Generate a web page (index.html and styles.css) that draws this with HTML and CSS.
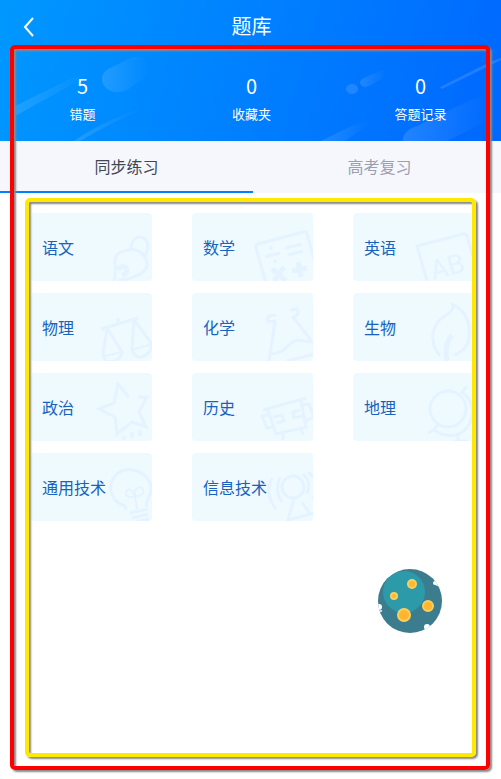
FILE: index.html
```html
<!DOCTYPE html>
<html lang="zh-CN">
<head>
<meta charset="utf-8">
<meta name="viewport" content="width=device-width, initial-scale=1">
<title>题库</title>
<link rel="stylesheet" href="styles.css">
</head>
<body>
<div class="page">
  <header class="hero">
    <svg class="hero-art" viewBox="0 0 501 141" preserveAspectRatio="none" aria-hidden="true">
      <defs>
        <linearGradient id="fade"><stop offset="0" stop-color="#fff" stop-opacity=".13"/><stop offset=".9" stop-color="#fff" stop-opacity="0"/></linearGradient>
      </defs>
      <g fill="url(#fade)">
        <path d="M9 111Q10 109 13 107L66 81Q80 74 98 68L75 83L17 115Z"/>
        <path d="M102 79C102 72 108 69 114 66L133 57Q150 55 153 72L127 90C114 96 102 89 102 79Z"/>
        <path d="M74 141Q105 119 152 105Q110 123 80 141Z"/>
        <path d="M321 141L345 129Q362 121 375 120L345 141Z"/>
        <path d="M403 141Q402 131 417 126L462 104Q480 95 501 94V114L447 141Z"/>
        <path d="M360 82Q361 79 366 77L387 68L389 75L369 86Q361 89 360 82Z"/>
      </g>
      <path d="M440 87L490 62L501 58V60L442 89Z" fill="#fff" opacity=".13"/>
      <ellipse cx="352" cy="89" rx="6" ry="5" fill="#fff" opacity=".12"/>
    </svg>
    <div class="topbar">
      <button class="back" type="button" aria-label="返回">
        <svg viewBox="0 0 12 20" width="12" height="20" aria-hidden="true"><path d="M10 1L2 10L10 19" fill="none" stroke="#fff" stroke-width="2"/></svg>
      </button>
      <h1 class="title">题库</h1>
    </div>
    <nav class="stats">
      <a class="stat" href="#wrong"><span class="count">5</span><span class="caption">错题</span></a>
      <a class="stat" href="#saved"><span class="count">0</span><span class="caption">收藏夹</span></a>
      <a class="stat" href="#log"><span class="count">0</span><span class="caption">答题记录</span></a>
    </nav>
  </header>
  <div class="tabs" role="tablist">
    <button class="tab active" type="button" role="tab" aria-selected="true">同步练习</button>
    <button class="tab" type="button" role="tab" aria-selected="false">高考复习</button>
  </div>
  <main class="subjects">
    <a class="card" href="#chinese"><svg class="art" viewBox="0 0 121 68" aria-hidden="true"><path d="M83 68Q85 60 84 49Q84 40 93 38L101 36Q113 38 116 49Q118 57 107 62Q98 67 87 67M100 36C100 27 106 22 112 25C119 29 117 36 114 43"/><path d="M87 57Q90 52 95 55Q98 61 91 62" stroke-width="5"/></svg><span>语文</span></a>
    <a class="card" href="#math"><svg class="art" viewBox="0 0 121 68" aria-hidden="true"><path d="M74 70L64 35Q63 32 66 31L111 19Q114 18 115 21L123 50M73 44L88 40M94 35L110 31M96 42L111 38"/><path d="M80 56L94 68M92 54L82 68M100 58L115 55M106 49L109 64" stroke-width="5"/><circle class="dot" cx="79" cy="35" r="2"/><circle class="dot" cx="83" cy="48" r="2"/></svg><span>数学</span></a>
    <a class="card" href="#english"><svg class="art" viewBox="0 0 121 68" aria-hidden="true"><path d="M74 68L64 33L110 21Q113 20 114 23L120 44"/><text class="letters" x="80" y="67" transform="rotate(-15 80 67)">AB</text></svg><span>英语</span></a>
    <a class="card" href="#physics"><svg class="art" viewBox="0 0 121 68" aria-hidden="true"><path d="M70 36L107 25M87 25V30M76 35L72 61Q73 69 80 69Q90 67 91 59L76 35M103 27L101 56Q103 65 111 64Q120 61 121 51L103 27"/><path d="M73 63L91 59M101 57L121 51" stroke-width="2"/></svg><span>物理</span></a>
    <a class="card" href="#chemistry"><svg class="art" viewBox="0 0 121 68" aria-hidden="true"><path d="M84 22L77 23Q74 25 77 29L83 28L77 68M98 17L104 16Q108 18 105 22L101 24L119 47M79 61Q90 60 96 53Q103 45 112 48L122 49M95 68L122 61"/></svg><span>化学</span></a>
    <a class="card" href="#biology"><svg class="art" viewBox="0 0 121 68" aria-hidden="true"><path d="M87 63Q78 52 80 39Q83 28 92 23Q101 18 100 12Q113 17 116 34Q119 56 101 62"/><path d="M99 42Q91 51 94 68" stroke-width="5"/></svg><span>生物</span></a>
    <a class="card" href="#politics"><svg class="art" viewBox="0 0 121 68" aria-hidden="true"><path d="M98 24L87 11L83 30L68 36L84 44L86 61L101 49L115 54L108 39L116 24L107 24"/><circle class="dot" cx="93" cy="65" r="2"/><ellipse class="dot" cx="101" cy="62" rx="2" ry="3"/><ellipse class="dot" cx="109" cy="60" rx="2" ry="3"/></svg><span>政治</span></a>
    <a class="card" href="#history"><svg class="art" viewBox="0 0 121 68" aria-hidden="true"><path d="M71 37L114 25M76 37L84 61L114 54L109 28M76 42L70 43L75 55L81 54M111 32L117 31L122 44L114 48M81 44L90 42L92 48L84 50M108 37L101 39L102 45L111 43M91 61V67M109 56L111 62"/></svg><span>历史</span></a>
    <a class="card" href="#geography"><svg class="art" viewBox="0 0 121 68" aria-hidden="true"><circle cx="95" cy="36" r="18"/><path d="M114 13L109 19Q122 29 119 43Q116 58 103 62Q91 64 81 57L75 60M81 57L85 51M105 62V68M101 68H115"/></svg><span>地理</span></a>
    <a class="card" href="#general"><svg class="art" viewBox="0 0 121 68" aria-hidden="true"><path d="M95 57L94 53C78 48 75 30 87 20C99 12 117 19 120 33C121 42 115 46 115 54M99 60L117 56M101 65L117 61M105 69L118 66"/><path d="M106 56L104 43C99 46 94 43 95 39C97 33 103 39 104 43C102 36 109 32 112 36C114 41 108 44 104 43" stroke-width="2"/></svg><span>通用技术</span></a>
    <a class="card" href="#it"><svg class="art" viewBox="0 0 121 68" aria-hidden="true"><circle cx="101" cy="34" r="11"/><path d="M102 46L96 67L122 60M110 49L118 61M88 24Q82 39 90 49M80 25Q72 41 84 56M111 21Q120 29 115 41M116 19Q130 30 121 46"/></svg><span>信息技术</span></a>
  </main>
  <button class="bubble" type="button" aria-label="悬浮助手">
    <svg viewBox="0 0 64 64" aria-hidden="true">
      <defs><clipPath id="ball"><circle cx="32" cy="32" r="32"/></clipPath></defs>
      <g clip-path="url(#ball)">
        <rect width="64" height="64" fill="#3b7d8e"/>
        <circle cx="26" cy="23" r="21" fill="#2d9aaa"/>
        <g fill="#fff"><circle cx="57" cy="14" r="2"/><circle cx="60" cy="14" r="3"/><circle cx="1" cy="38" r="3"/><circle cx="3" cy="42" r="1"/><circle cx="49" cy="58" r="3"/><circle cx="51" cy="61" r="3"/></g>
      </g>
      <g fill="#ffb52e" stroke="#fccf5c" stroke-width="2"><circle cx="34" cy="15" r="4"/><circle cx="16" cy="27" r="3"/><circle cx="50" cy="37" r="5"/><circle cx="26" cy="46" r="6"/></g>
    </svg>
  </button>
  <div class="frame frame-outer"></div>
  <div class="frame frame-inner"></div>
</div>
</body>
</html>
```
FILE: styles.css
```css
* {
  box-sizing: border-box;
}

body {
  margin: 0;
  background: #fff;
  font-family: Roboto, "Noto Sans CJK SC", sans-serif;
}

a {
  color: inherit;
  text-decoration: none;
}

button {
  padding: 0;
  border: 0;
  background: none;
  font: inherit;
}

.page {
  position: relative;
  min-height: 100vh;
  overflow: hidden;
}

.hero {
  position: relative;
  padding-bottom: 16px;
  color: #fff;
  background: linear-gradient(105deg, #0098ff 0%, #0080ff 50%, #0068ff 100%);
}

.hero-art {
  position: absolute;
  inset: 0;
  width: 100%;
  height: 100%;
}

.topbar {
  position: relative;
  display: grid;
  grid-template-columns: 48px 1fr 46px;
  align-items: center;
  height: 53px;
}

.back {
  display: flex;
  justify-content: flex-end;
  padding-right: 13px;
}

.title {
  margin: 0;
  font-size: 20px;
  line-height: 24px;
  font-weight: 400;
  text-align: center;
}

.stats {
  position: relative;
  display: grid;
  grid-template-columns: repeat(3, 1fr);
  gap: 8px;
  padding: 19px 0 0 2px;
}

.stat {
  display: flex;
  flex-direction: column;
  align-items: center;
  gap: 4px;
}

.count {
  font-family: "Noto Sans CJK SC", sans-serif;
  font-size: 20px;
  line-height: 28px;
}

.caption {
  font-size: 13px;
  line-height: 21px;
}

.tabs {
  display: grid;
  grid-template-columns: 50.5% 50.5%;
  background: #f5f7fc;
}

.tab {
  height: 52px;
  border-bottom: 2px solid transparent;
  font-size: 16px;
  color: #9b9fae;
}

.tab.active {
  border-color: #0080ff;
  color: #3f4654;
}

.subjects {
  display: grid;
  grid-template-columns: repeat(3, 1fr);
  grid-auto-rows: 68px;
  gap: 12px 40px;
  padding: 20px 27px 20px 31px;
}

.card {
  position: relative;
  display: flex;
  align-items: center;
  padding-left: 11px;
  border-radius: 4px;
  overflow: hidden;
  background: #eefaff;
  color: #1862bd;
  font-size: 16px;
}

.card span {
  position: relative;
}

.art {
  position: absolute;
  right: 0;
  bottom: 0;
  width: 121px;
  height: 68px;
  fill: none;
  stroke: #e4f3ff;
  stroke-width: 3px;
}

.art [stroke-width="2"] {
  stroke-width: 2px;
}

.art [stroke-width="5"] {
  stroke-width: 5px;
}

.dot,
.letters {
  fill: #e4f3ff;
  stroke: none;
}

.letters {
  font-size: 27px;
}

.bubble {
  position: absolute;
  right: 59px;
  bottom: 146px;
  width: 64px;
  height: 64px;
}

.bubble svg {
  display: block;
}

.frame {
  position: absolute;
  border: 4px solid;
  border-radius: 5px;
  box-shadow: 2px 2px 2px #888, inset 2px 2px 2px #888;
  pointer-events: none;
}

.frame-outer {
  inset: 45px 11px 9px 10px;
  border-color: #f00;
}

.frame-inner {
  inset: 198px 25px 22px 25px;
  border-color: #ffe900;
}
```
